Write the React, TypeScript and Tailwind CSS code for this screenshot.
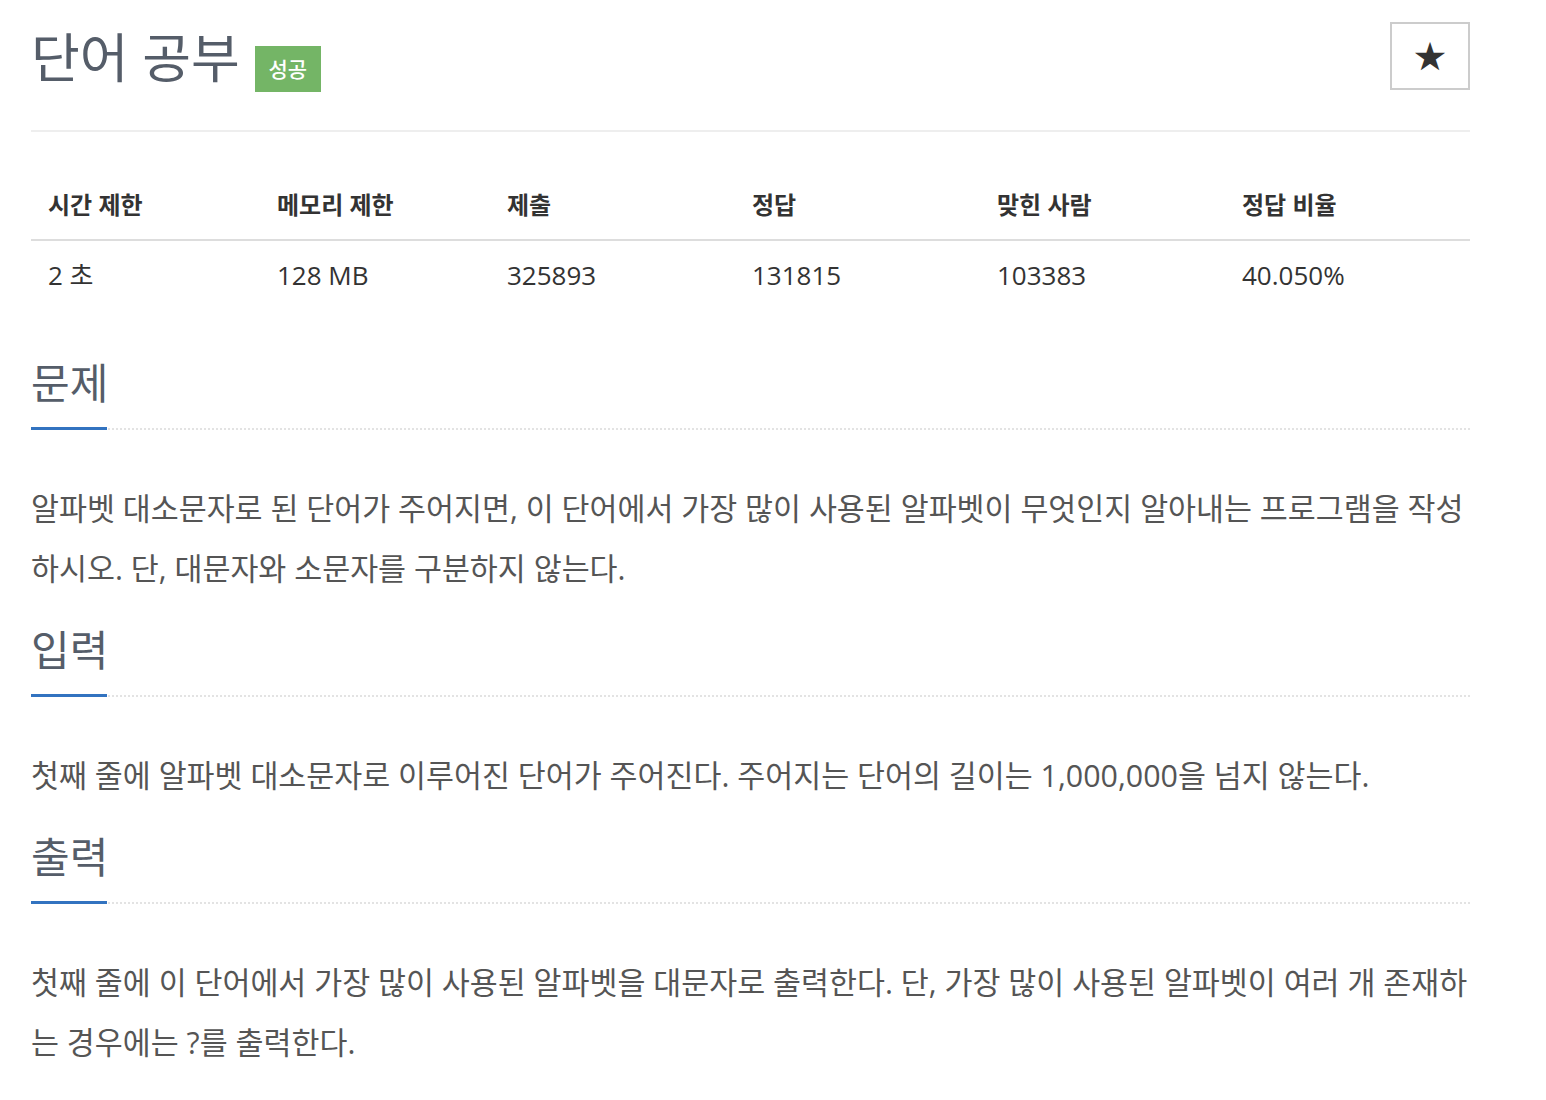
const font = { fontFamily: '"Open Sans", "Noto Sans CJK KR", sans-serif' };

const stats = [
  { label: '시간 제한', value: '2 초', w: 'w-[229px]' },
  { label: '메모리 제한', value: '128 MB', w: 'w-[230px]' },
  { label: '제출', value: '325893', w: 'w-[245px]' },
  { label: '정답', value: '131815', w: 'w-[245px]' },
  { label: '맞힌 사람', value: '103383', w: 'w-[245px]' },
  { label: '정답 비율', value: '40.050%', w: 'w-[245px]' },
];

function Section({ title, lines }: { title: string; lines: string[] }) {
  return (
    <section>
      <div className="relative border-b-2 border-dotted border-[#e3e3e3]">
        <h2 className="text-[42px] leading-[50px] text-[#555d69] pb-[20px]">{title}</h2>
        <span className="absolute left-0 bottom-[-2px] h-[3px] w-[76px] bg-[#3273c0]" />
      </div>
      <div className="pt-[49px] text-[30.4px] leading-[60px] text-[#555] whitespace-nowrap">
        {lines.map((l, i) => (
          <div key={i}>{l}</div>
        ))}
      </div>
    </section>
  );
}

export default function App() {
  return (
    <div className="min-h-screen bg-white" style={font}>
      <div className="pl-[31px] w-[1470px]">
        {/* title */}
        <div className="flex justify-between items-start pt-[22px] pb-[40px] border-b-2 border-[#eee]">
          <h1 className="flex items-center gap-[15px] h-[67px] text-[53px] leading-[67px] text-[#555d69]">
            <span className="mt-[4px]">단어 공부</span>
            <span className="mt-[27px] inline-flex items-center justify-center w-[66px] h-[46px] bg-[#74b566] text-white text-[21px] font-medium">
              성공
            </span>
          </h1>
          <button className="w-[80px] h-[68px] border-2 border-[#ccc] flex items-center justify-center text-[32px] text-[#333]">
            ★
          </button>
        </div>

        {/* stats table */}
        <table className="mt-[38px] w-full border-collapse">
          <thead>
            <tr className="border-b-2 border-[#ddd]">
              {stats.map((s) => (
                <th key={s.label} className={`${s.w} h-[70px] pl-[17px] text-left text-[24px] font-bold text-[#333]`}>
                  {s.label}
                </th>
              ))}
            </tr>
          </thead>
          <tbody>
            <tr>
              {stats.map((s) => (
                <td key={s.label} className="h-[70px] pl-[17px] text-[26px] text-[#333]">
                  {s.value}
                </td>
              ))}
            </tr>
          </tbody>
        </table>

        <div className="mt-[48px] flex flex-col gap-[26px] pb-[40px]">
          <Section
            title="문제"
            lines={[
              '알파벳 대소문자로 된 단어가 주어지면, 이 단어에서 가장 많이 사용된 알파벳이 무엇인지 알아내는 프로그램을 작성',
              '하시오. 단, 대문자와 소문자를 구분하지 않는다.',
            ]}
          />
          <Section
            title="입력"
            lines={['첫째 줄에 알파벳 대소문자로 이루어진 단어가 주어진다. 주어지는 단어의 길이는 1,000,000을 넘지 않는다.']}
          />
          <Section
            title="출력"
            lines={[
              '첫째 줄에 이 단어에서 가장 많이 사용된 알파벳을 대문자로 출력한다. 단, 가장 많이 사용된 알파벳이 여러 개 존재하',
              '는 경우에는 ?를 출력한다.',
            ]}
          />
        </div>
      </div>
    </div>
  );
}
